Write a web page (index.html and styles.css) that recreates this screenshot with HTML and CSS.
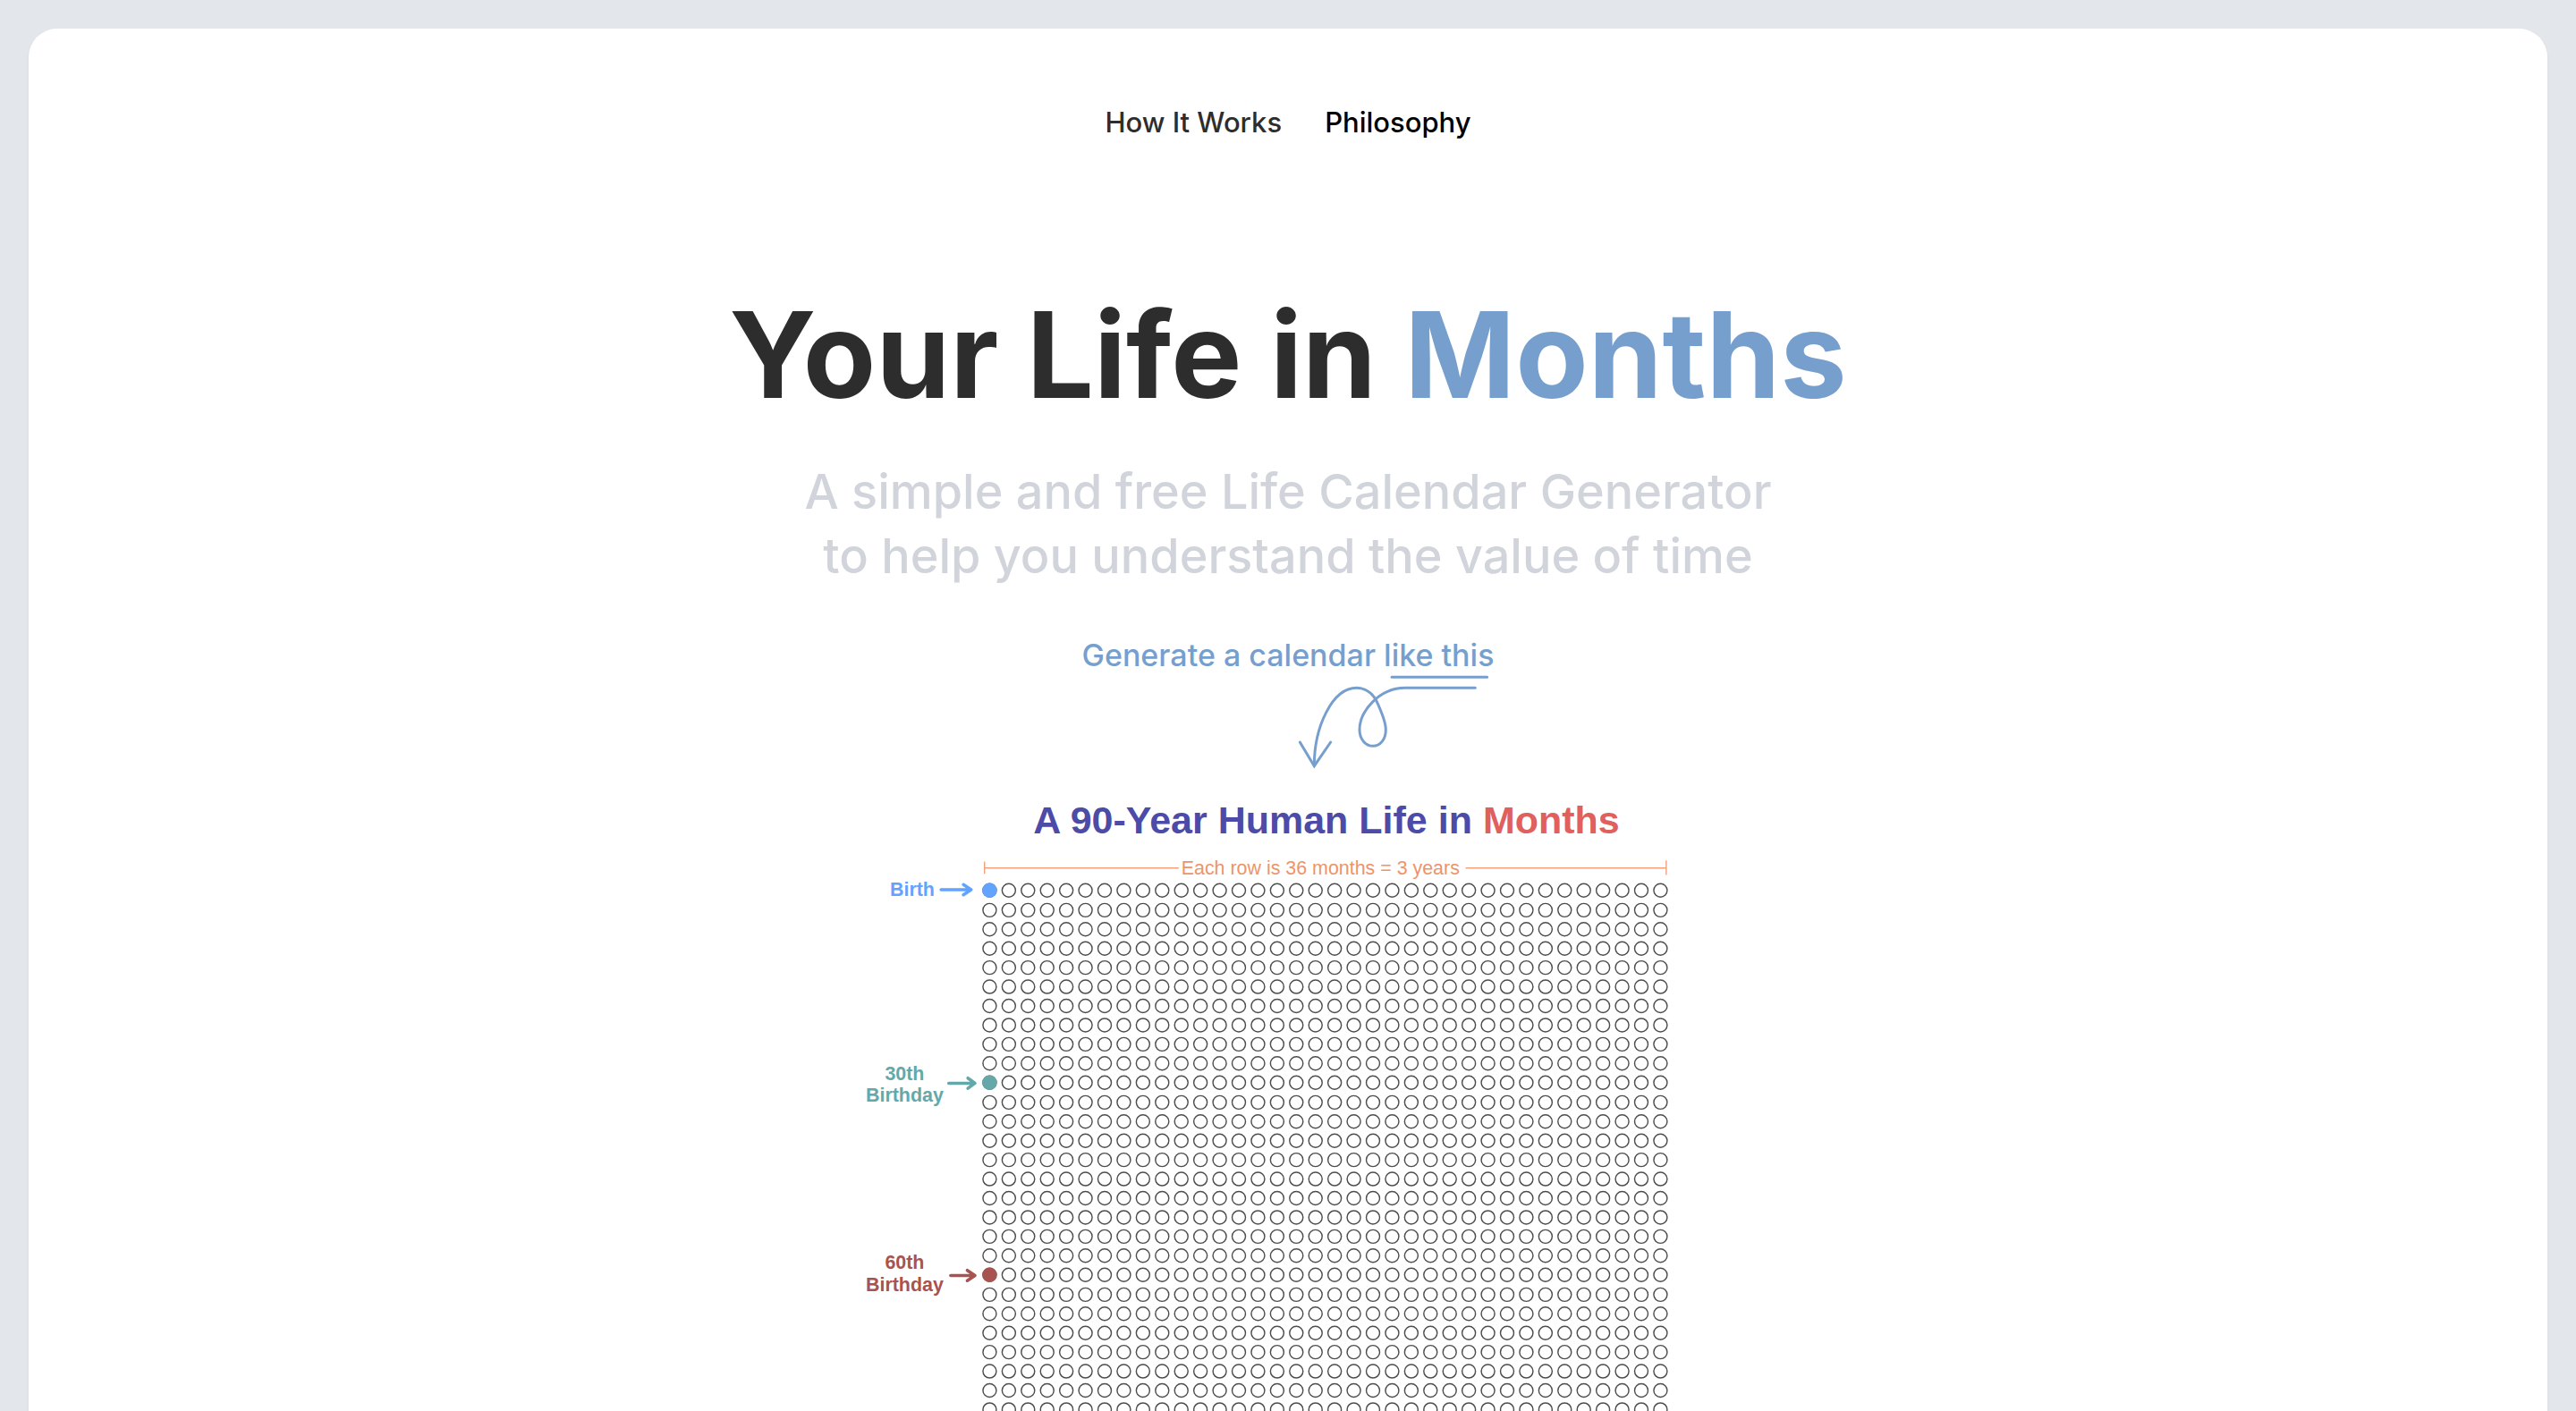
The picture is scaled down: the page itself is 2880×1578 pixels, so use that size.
FILE: index.html
```html
<!DOCTYPE html>
<html lang="en">
<head>
<meta charset="utf-8">
<meta name="viewport" content="width=device-width, initial-scale=1">
<title>Your Life in Months</title>
<link rel="stylesheet" href="styles.css">
</head>
<body>
<div class="card">
  <nav class="nav">
    <a class="nav-link" href="#how">How It Works</a>
    <a class="nav-link nav-link-active" href="#philosophy">Philosophy</a>
  </nav>
  <main class="hero">
    <h1 class="title">Your Life in <span class="accent">Months</span></h1>
    <p class="subtitle">A simple and free Life Calendar Generator<br>to help you understand the value of time</p>
    <div class="callout">
      <p class="callout-text">Generate a calendar like this</p>
      <svg class="swirl" viewBox="812 192 648 324" aria-hidden="true">
        <path d="M1130 202H1450M1410 238H1175C1085 238 1022 320 1022 378C1022 412 1044 433 1067 433C1092 433 1110 410 1110 378C1110 352 1092 310 1077 278C1062 252 1037 238 1012 238C930 238 870 370 870 498"/>
        <path d="M822 420L870 500L925 420"/>
      </svg>
    </div>
    <figure class="calendar">
      <figcaption class="calendar-title">A 90-Year Human Life in <span class="calendar-accent">Months</span></figcaption>
      <svg class="chart" viewBox="0 0 1344 952" role="img" aria-label="Life calendar">
        <defs>
          <circle id="dot" r="10.5"/>
          <g id="six"><use href="#dot"/><use href="#dot" x="30"/><use href="#dot" x="60"/><use href="#dot" x="90"/><use href="#dot" x="120"/><use href="#dot" x="150"/></g>
          <g id="row"><use href="#six"/><use href="#six" x="180"/><use href="#six" x="360"/><use href="#six" x="540"/><use href="#six" x="720"/><use href="#six" x="900"/></g>
          <g id="rows3"><use href="#row"/><use href="#row" y="30"/><use href="#row" y="60"/></g>
          <g id="rows9"><use href="#rows3"/><use href="#rows3" y="90"/><use href="#rows3" y="180"/></g>
          <g id="rows10"><use href="#rows9"/><use href="#row" y="270"/></g>
        </defs>
        <g class="dots">
          <use href="#row" x="205" y="50"/>
          <use href="#rows10" x="205" y="81"/>
          <use href="#rows10" x="205" y="382"/>
          <use href="#rows9" x="205" y="683"/>
        </g>
        <g class="span">
          <path d="M197 5V24M197 15H501M950 15H1264M1264 3V26"/>
          <text x="505" y="25">Each row is 36 months = 3 years</text>
        </g>
        <g class="mark birth">
          <text x="49" y="59">Birth</text>
          <path d="M129 49H176M164 41L176 49L164 57"/>
          <circle cx="205" cy="50" r="11.5"/>
        </g>
        <g class="mark thirty">
          <text class="centered" x="72" y="347">30th</text>
          <text class="centered" x="72" y="381">Birthday</text>
          <path d="M141 352H182M171 344L182 352L171 360"/>
          <circle cx="205" cy="351" r="11.5"/>
        </g>
        <g class="mark sixty">
          <text class="centered" x="72" y="643">60th</text>
          <text class="centered" x="72" y="677">Birthday</text>
          <path d="M144 653H182M170 645L182 653L170 661"/>
          <circle cx="205" cy="652" r="11.5"/>
        </g>
      </svg>
    </figure>
  </main>
</div>
</body>
</html>
```
FILE: styles.css
```css
* { box-sizing: border-box; }

body {
  margin: 0;
  padding: 32px;
  background: #e3e7ec;
  color: #2d2d2d;
  font-family: Inter, "Liberation Sans", sans-serif;
}

.card {
  padding: 83px 32px 64px;
  border-radius: 32px;
  background: #fff;
  box-shadow: 0 2px 4px rgba(0, 0, 0, 0.04);
}

.nav {
  display: flex;
  justify-content: center;
  gap: 48px;
}

.nav-link {
  color: #2d2d2d;
  font-size: 31px;
  font-weight: 500;
  line-height: 44px;
  text-decoration: none;
}

.nav-link-active { color: #000; }

.hero {
  display: flex;
  flex-direction: column;
  align-items: center;
}

.title {
  margin: 166px 0 0;
  font-size: 133px;
  font-weight: 700;
  line-height: 144px;
}

.accent { color: #779fce; }

.subtitle {
  margin: 45px 0 0;
  color: #d1d5db;
  font-size: 54px;
  font-weight: 500;
  line-height: 72px;
  text-align: center;
}

.callout {
  display: flex;
  flex-direction: column;
  align-items: flex-end;
  margin-top: 57px;
  color: #779fce;
}

.callout-text {
  margin: 0;
  font-size: 34px;
  font-weight: 500;
  line-height: 36px;
}

.swirl {
  width: 216px;
  height: 108px;
  margin: 3px 4px 0 0;
  fill: none;
  stroke: currentColor;
  stroke-width: 9;
  stroke-linecap: round;
}

.calendar {
  width: 960px;
  max-width: 100%;
  margin: 31px 0 0;
  font-family: "Liberation Sans", Arial, sans-serif;
}

.calendar-title {
  padding-left: 86px;
  color: #4c4ca8;
  font-size: 43px;
  font-weight: 700;
  line-height: 48px;
  text-align: center;
}

.calendar-accent { color: #e0605d; }

.chart {
  display: block;
  width: 100%;
  margin-top: 19px;
  font-size: 30px;
}

.dots {
  fill: none;
  stroke: #4d4d4d;
  stroke-width: 2;
}

.span { fill: #ee9469; }

.span path {
  stroke: #f4a27c;
  stroke-width: 2;
}

.mark {
  fill: currentColor;
  font-weight: 700;
}

.mark path {
  fill: none;
  stroke: currentColor;
  stroke-width: 5;
  stroke-linecap: round;
  stroke-linejoin: round;
}

.centered { text-anchor: middle; }
.birth { color: #62a3ff; }
.thirty { color: #64a8aa; }
.sixty { color: #a85350; }
```
